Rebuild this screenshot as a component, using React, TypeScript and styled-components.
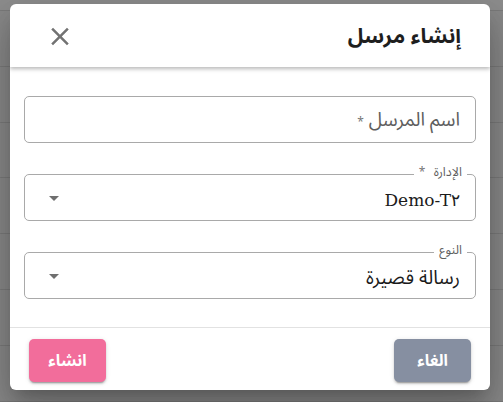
import React from "react";
import styled, { createGlobalStyle } from "styled-components";

const SANS = '"Noto Sans Arabic", "Noto Sans Arabic UI", "Noto Kufi Arabic", Roboto, "Noto Sans", "DejaVu Sans", sans-serif';

const Global = createGlobalStyle`
  *, *::before, *::after { box-sizing: border-box; }
  html, body { margin: 0; padding: 0; }
  body {
    width: 503px;
    height: 402px;
    overflow: hidden;
    background: #898989;
    font-family: ${SANS};
  }
`;

const Page = styled.div`
  height: 402px;
  display: flex;
  flex-direction: column;
`;

const TopBand = styled.div`
  height: 11px;
  background: #8e8e8e;
  border-bottom: 1px solid #7b7b7b;
`;

const BgRow = styled.div`
  height: 57.5px;
  border-bottom: 1px solid #7b7b7b;
`;

const Dialog = styled.div`
  position: absolute;
  top: 4px;
  left: 10px;
  width: 480px;
  height: 386px;
  background: #fff;
  border-radius: 6px;
  box-shadow: 0 11px 15px -7px rgba(0, 0, 0, 0.2),
    0 24px 38px 3px rgba(0, 0, 0, 0.14), 0 9px 46px 8px rgba(0, 0, 0, 0.12);
  display: flex;
  flex-direction: column;
  overflow: hidden;
`;

const Header = styled.div`
  height: 63px;
  flex: none;
  display: flex;
  align-items: center;
  justify-content: space-between;
  padding: 0 29px 0 35px;
  box-shadow: 0 2px 4px rgba(0, 0, 0, 0.28);
  position: relative;
  z-index: 1;
`;

const Title = styled.h2`
  margin: 0;
  font-size: 21px;
  line-height: 1.2;
  font-weight: 700;
  color: #1e1e1e;
  padding-top: 2px;
`;

const CloseBtn = styled.button`
  border: 0;
  background: none;
  padding: 0;
  width: 30px;
  height: 30px;
  display: flex;
  align-items: center;
  justify-content: center;
  color: #727272;
  cursor: pointer;
  margin-top: 1px;
`;

const Body = styled.div`
  flex: 1;
  display: flex;
  flex-direction: column;
  gap: 31px;
  padding: 29px 14px 0;
  border-bottom: 1px solid #e2e2e2;
`;

const Box = styled.div`
  position: relative;
  height: 47px;
  border: 1px solid #a9a9a9;
  border-radius: 5px;
  display: flex;
  align-items: center;
  justify-content: space-between;
  padding: 0 15px 0 16px;
`;

const Placeholder = styled.span`
  font-size: 19px;
  line-height: 1.2;
  color: #5e5e5e;
  padding-top: 1px;
`;

const Star = styled.span`
  font-size: 12px;
  margin-right: 5px;
  color: #777;
`;

const FloatLabel = styled.span`
  position: absolute;
  top: -10px;
  right: 8px;
  padding: 0 5px;
  background: #fff;
  font-size: 12.5px;
  line-height: 14px;
  color: #5e5e5e;
`;

const Value = styled.span<{ $latin?: boolean }>`
  font-size: ${(p) => (p.$latin ? "17px" : "19px")};
  line-height: 22px;
  color: #1b1b1b;
  font-family: ${(p) => (p.$latin ? '"DejaVu Serif", serif' : SANS)};
  margin-top: 4px;
`;

const Arrow = styled.svg`
  width: 24px;
  height: 24px;
  fill: #6f6f6f;
  flex: none;
  margin-left: 1px;
`;

const Footer = styled.div`
  height: 62px;
  flex: none;
  display: flex;
  align-items: flex-start;
  justify-content: space-between;
  padding: 11px 19px 0;
`;

const Btn = styled.button<{ $tone: "pink" | "grey" }>`
  width: 77px;
  height: 43px;
  border: 0;
  border-radius: 5px;
  background: ${(p) => (p.$tone === "pink" ? "#f26d9b" : "#868fa1")};
  color: #fff;
  font-family: ${SANS};
  font-size: 16px;
  font-weight: 700;
  box-shadow: 0 3px 1px -2px rgba(0, 0, 0, 0.2), 0 2px 2px 0 rgba(0, 0, 0, 0.14),
    0 1px 5px 0 rgba(0, 0, 0, 0.12);
  cursor: pointer;
`;

const DropArrow = () => (
  <Arrow viewBox="0 0 24 24">
    <path d="M7 10l5 5 5-5z" />
  </Arrow>
);

export default function App() {
  return (
    <>
      <Global />
      <Page>
        <TopBand />
        {Array.from({ length: 7 }).map((_, i) => (
          <BgRow key={i} />
        ))}
      </Page>
      <Dialog dir="rtl">
        <Header>
          <Title>إنشاء مرسل</Title>
          <CloseBtn aria-label="close">
            <svg width="31" height="31" viewBox="0 0 24 24" fill="currentColor">
              <path d="M19 6.41L17.59 5 12 10.59 6.41 5 5 6.41 10.59 12 5 17.59 6.41 19 12 13.41 17.59 19 19 17.59 13.41 12z" />
            </svg>
          </CloseBtn>
        </Header>
        <Body>
          <Box>
            <Placeholder>
              اسم المرسل<Star>*</Star>
            </Placeholder>
          </Box>
          <Box>
            <FloatLabel>
              الإدارة <Star>*</Star>
            </FloatLabel>
            <Value $latin>Demo-T٢</Value>
            <DropArrow />
          </Box>
          <Box>
            <FloatLabel>النوع</FloatLabel>
            <Value>رسالة قصيرة</Value>
            <DropArrow />
          </Box>
        </Body>
        <Footer>
          <Btn $tone="grey">الغاء</Btn>
          <Btn $tone="pink">انشاء</Btn>
        </Footer>
      </Dialog>
    </>
  );
}
